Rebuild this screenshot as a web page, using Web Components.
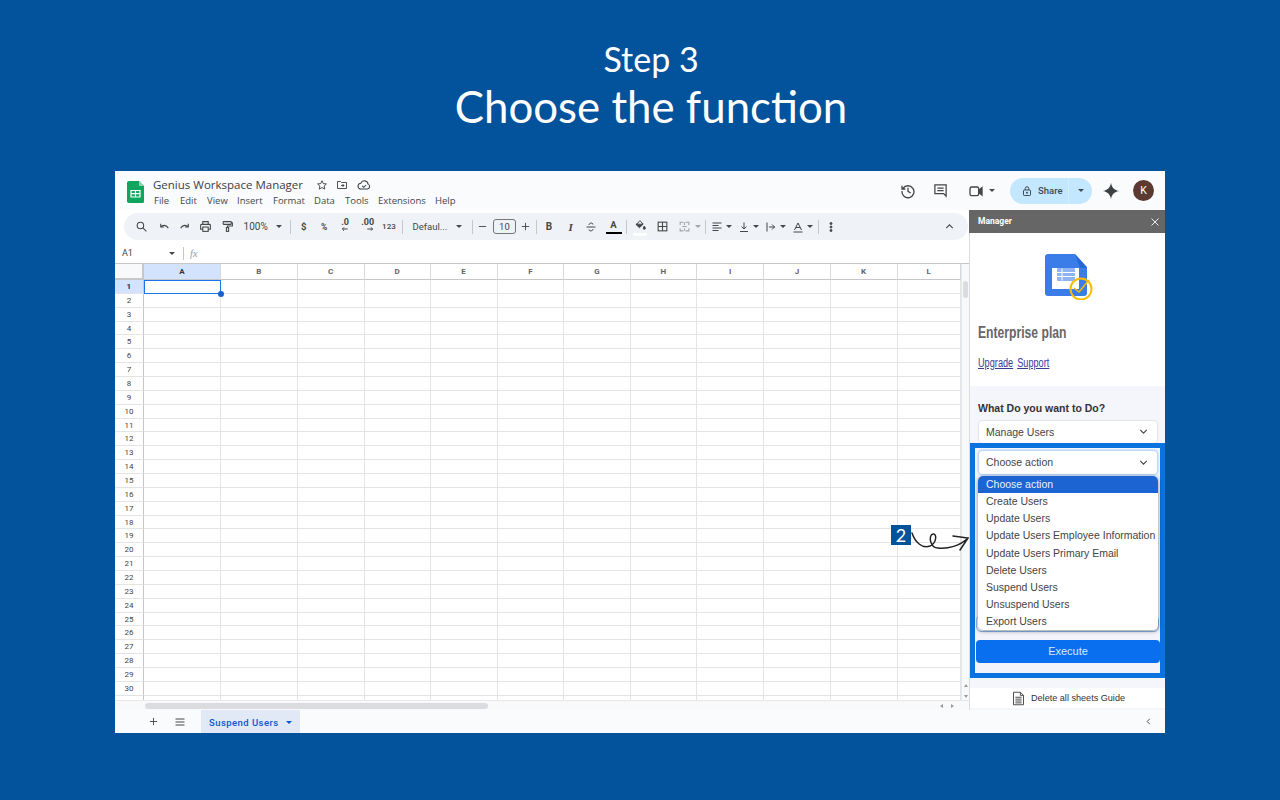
<!DOCTYPE html>
<html lang="en"><head><meta charset="utf-8"><title>Choose the function</title>
<style>
html,body{margin:0;padding:0;height:800px;overflow:hidden;background:#03529c}
body{font-family:"Liberation Sans",Arial,sans-serif}
</style></head><body>
<step-page>
  <step-title slot="title"></step-title>
  <sheet-window slot="window"></sheet-window>
</step-page>
<script>
const ICONS={
search:'<circle cx="10" cy="10" r="6"/><path d="M14.5 14.5 21 21"/>',
undo:'<path d="M5 7v6h6M5 13c3-4 10-5 14 2"/>',
redo:'<path d="M19 7v6h-6M19 13c-3-4-10-5-14 2"/>',
print:'<path d="M7 8V3h10v5M7 17H3V9.500A1.500 1.500 0 0 1 4.500 8h15A1.500 1.500 0 0 1 21 9.500V17h-4"/><rect x="7" y="13" width="10" height="8"/>',
paint:'<rect x="4" y="3" width="15" height="5" rx="1"/><path d="M19 5h2v6h-9v3"/><rect x="10" y="14" width="4" height="7"/>',
strike:'<path d="M3 12h18M8 8c0-5 8-5 8-1M16 16c0 5-8 5-8 1"/>',
fill:'<path d="M11 3 4 10.500 10 16l7-6.500z"/><path d="M19 13c1 2 2 3 2 4a2 2 0 0 1-4 0c0-1 1-2 2-4z" fill="currentColor"/><path d="M4 9.500 10 15l6.500-5.500H4z" fill="currentColor"/>',
borders:'<rect x="4" y="4" width="16" height="16"/><path d="M12 4v16M4 12h16"/>',
merge:'<path d="M4 9V4h6M14 4h6v5M4 15v5h6M14 20h6v-5M12 4v5M12 15v5M8 12h8"/>',
alignl:'<path d="M3 4h18M3 9h12M3 14h18M3 19h12"/>',
valign:'<path d="M12 3v12M7 11l5 5 5-5M4 21h16"/>',
wrap:'<path d="M4 3v18M8 12h12M14 7l5 5-5 5"/>',
rotate:'<path d="M5 18 12 4l7 14M7.500 13h9M3 22h18"/>',
chevup:'<path d="M6 15l6-6 6 6"/>',
chevdown:'<path d="M6 9l6 6 6-6"/>',
chevleft:'<path d="M15 6l-6 6 6 6"/>',
history:'<path d="M4.500 8A9 9 0 1 1 3 12M3 4v5h5M12 7v5.500l4 2.500"/>',
comment:'<path d="M3 3h18v18l-4-4H3zM7 8h10M7 12h10"/>',
video:'<rect x="3" y="6" width="13" height="13" rx="2.500"/><path d="M16 11l5-4v11l-5-4z" fill="currentColor"/>',
lock:'<rect x="5" y="10" width="14" height="11" rx="1.500"/><path d="M8.500 10V7a3.500 3.500 0 0 1 7 0v3"/><circle cx="12" cy="15.500" r="1.200" fill="currentColor"/>',
star:'<path d="M12 3.500l2.600 5.700 6.200.7-4.600 4.200 1.300 6.100L12 17.100l-5.500 3.100 1.300-6.100-4.600-4.200 6.200-.7z"/>',
folder:'<path d="M3 5h6l2 2h10v12H3zM10 13h6M13 10l3 3-3 3"/>',
cloud:'<path d="M7 19a5 5 0 0 1-.5-10A6.500 6.500 0 0 1 19 10.500 4.500 4.500 0 0 1 18 19zM9 13.500l2.500 2.500 4-4"/>',
spark:'<path d="M12 1c1 6.500 4.500 10 11 11-6.500 1-10 4.500-11 11-1-6.500-4.500-10-11-11 6.500-1 10-4.500 11-11z" fill="currentColor" stroke="none"/>',
close:'<path d="M5 5l14 14M19 5 5 19"/>',
plus:'<path d="M12 4v16M4 12h16"/>',
minus:'<path d="M4 12h16"/>',
menu:'<path d="M3 6h18M3 12h18M3 18h18"/>',
more:'<circle cx="12" cy="5" r="2" fill="currentColor"/><circle cx="12" cy="12" r="2" fill="currentColor"/><circle cx="12" cy="19" r="2" fill="currentColor"/>',
doc:'<path d="M4 2h11l5 5v15H4zM15 2v5h5M7 10h10M7 13h10M7 16h10M7 19h10"/>',
arrowl:'<path d="M20 12H5M9 7l-5 5 5 5"/>',
arrowr:'<path d="M4 12h15M15 7l5 5-5 5"/>'
};
class SIcon extends HTMLElement{connectedCallback(){
 const n=this.getAttribute('name'),s=+(this.getAttribute('size')||13),w=this.getAttribute('sw')||2;
 this.attachShadow({mode:'open'}).innerHTML=`<style>:host{display:inline-flex;align-items:center;justify-content:center;flex:none;line-height:0}</style><svg width="${s}" height="${s}" viewBox="0 0 24 24" fill="none" stroke="currentColor" stroke-width="${w}">${ICONS[n]||''}</svg>`;
}}
class SCaret extends HTMLElement{connectedCallback(){
 this.attachShadow({mode:'open'}).innerHTML=`<style>:host{display:inline-block;flex:none;width:0;height:0;border-left:3px solid transparent;border-right:3px solid transparent;border-top:3px solid currentColor}</style>`;
}}
customElements.define('s-icon',SIcon);customElements.define('s-caret',SCaret);

class StepPage extends HTMLElement{connectedCallback(){
 this.attachShadow({mode:'open'}).innerHTML=`<style>:host{display:flex;flex-direction:column;height:800px;box-sizing:border-box;padding:39px 115px 0}</style><slot name="title"></slot><slot name="window"></slot>`;
}}
class StepTitle extends HTMLElement{connectedCallback(){
 this.attachShadow({mode:'open'}).innerHTML=`<style>:host{display:flex;flex-direction:column;align-items:center;height:132px;padding-left:22px;color:#fff;font-family:Lato,"Open Sans",sans-serif;font-weight:400}
 .a{font-size:34px;line-height:39px}.b{font-size:43.800px;line-height:56px;font-variant-ligatures:common-ligatures}</style><div class="a">Step 3</div><div class="b">Choose the function</div>`;
}}
class SheetWindow extends HTMLElement{connectedCallback(){
 this.attachShadow({mode:'open'}).innerHTML=`<style>:host{display:flex;flex-direction:column;width:1050px;height:562px;background:#f9fbfd;position:relative;overflow:visible;color:#444746}
 .main{display:flex;height:500px;min-height:0}.left{width:854px;display:flex;flex-direction:column;flex:none;background:#fff}
 .badge{position:absolute;left:776px;top:354px;width:20px;height:20px;background:#03529c;color:#fff;font:18px/20px Lato,sans-serif;text-align:center}
 svg.sq{position:absolute;left:795px;top:357px}</style>
 <sheet-header></sheet-header>
 <div class="main"><div class="left"><sheet-toolbar></sheet-toolbar><formula-bar></formula-bar><sheet-grid></sheet-grid></div><side-panel></side-panel></div>
 <sheet-tabs></sheet-tabs>
 <div class="badge">2</div>
 <svg class="sq" width="62" height="28" viewBox="0 0 62 28" fill="none" stroke="#222" stroke-width="1.500" stroke-linecap="round"><path d="M2 5C5 14 12 21 20 18 27 15 27 5 23 6 18 7 20 20 28 20 38 21 50 18 58 10M43 8l15 2-8 12"/></svg>`;
}}
class SheetHeader extends HTMLElement{connectedCallback(){
 const menus=[['File',26],['Edit',27],['View',30],['Insert',36],['Format',41],['Data',31],['Tools',33],['Extensions',57],['Help',30]];
 this.attachShadow({mode:'open'}).innerHTML=`<style>:host{display:flex;height:39px;flex:none;align-items:stretch;background:#f9fbfd;box-sizing:border-box;padding-left:12px;font-family:"Open Sans",Roboto,sans-serif}
 .logo{margin-top:10px;flex:none}.txt{margin-left:9px;display:flex;flex-direction:column;padding-top:6px}
 .t{display:flex;align-items:center;font-size:11.500px;line-height:15px;color:#3c4043;height:15px}
 .m{display:flex;font-size:9.500px;line-height:14px;margin-top:2px;margin-left:1px}.m span{display:block}
 .sp{flex:1}.r{display:flex;align-items:center;padding-right:11px;color:#444746;padding-top:0}
 .share{width:82px;height:26px;border-radius:13px;background:#c2e7ff;display:flex;align-items:center;margin-left:15px;font:500 9.500px Roboto,sans-serif;color:#3f4a52;box-sizing:border-box}
 .s1{display:flex;align-items:center;gap:5px;padding-left:11px;width:59px;box-sizing:border-box;height:26px;border-right:1px solid #d5eeff}.s2{flex:1;display:flex;justify-content:center}
 .av{width:21px;height:21px;border-radius:50%;background:#5b3a30;color:#fff;font:10.500px/21px Roboto,sans-serif;text-align:center;margin-left:13px}</style>
 <svg class="logo" width="17" height="22" viewBox="0 0 17 22"><path d="M2 0h10l5 5v15.500a1.500 1.500 0 0 1-1.500 1.500h-13.500A2 2 0 0 1 0 20.500V2a2 2 0 0 1 2-2z" fill="#10a55e"/><path d="M12 0l5 5h-5z" fill="#8ad4ae"/><path d="M4 9.500h9v6.500H4zM4 12.700h9M8.500 9.500v6.500" fill="none" stroke="#fff" stroke-width="1.200"/></svg>
 <div class="txt"><div class="t">Genius Workspace Manager<s-icon name="star" size="12" sw="1.800" style="margin-left:13px"></s-icon><s-icon name="folder" size="12" sw="1.800" style="margin-left:8px"></s-icon><s-icon name="cloud" size="14" sw="1.800" style="margin-left:9px"></s-icon></div>
 <div class="m">${menus.map(m=>`<span style="width:${m[1]}px">${m[0]}</span>`).join('')}</div></div>
 <div class="sp"></div>
 <div class="r"><s-icon name="history" size="16"></s-icon><s-icon name="comment" size="15" style="margin-left:17px"></s-icon><s-icon name="video" size="16" style="margin-left:20px"></s-icon><s-caret style="margin-left:5px"></s-caret>
 <div class="share" style="margin-left:15px"><div class="s1"><s-icon name="lock" size="12"></s-icon><span>Share</span></div><div class="s2"><s-caret></s-caret></div></div>
 <s-icon name="spark" size="18" style="margin-left:10px;color:#3c4043"></s-icon><div class="av">K</div></div>`;
}}
class SheetToolbar extends HTMLElement{connectedCallback(){
 // [centre x on the page, width, markup]: spacing between items is derived from these
 const ic=(n,s=13,sw=2)=>`<s-icon name="${n}" size="${s}" sw="${sw}"></s-icon>`;
 const car='<s-caret></s-caret>', sep='<span class="sep"></span>';
 const dec=(t,a)=>`<span class="dec"><b>${t}</b><s-icon name="${a}" size="8" sw="3"></s-icon></span>`;
 const items=[
 [141,14,ic('search')],[164.3,14,ic('undo')],[184.3,14,ic('redo')],[205.7,14,ic('print')],[227.7,14,ic('paint')],
 [255.7,26,'<span style="font-size:10px">100%</span>'],[279,6,car],[290.7,1,sep],
 [303.7,8,'<b>$</b>'],[324.3,10,'<b style="font-size:8.500px">%</b>'],[345,14,dec('.0','arrowl')],[367.7,16,dec('.00','arrowr')],[389,16,'<span style="font-size:8px;font-weight:500">123</span>'],[402.3,1,sep],
 [430,40,'<span>Defaul...</span>'],[459.3,6,car],[472.3,1,sep],
 [483,11,ic('minus',11)],[504.5,23,'<span class="box">10</span>'],[525.3,11,ic('plus',11)],[536.7,1,sep],
 [549,8,'<b style="font-size:10px">B</b>'],[570.7,8,'<i style="font:bold italic 11px Liberation Serif,serif">I</i>'],[591.3,12,ic('strike',12)],
 [613.7,16,'<span class="au"><b>A</b><span class="bar"></span></span>'],[626.7,1,sep],
 [640.3,14,'<span class="fi">'+ic('fill',13,1.800)+'<span class="bar w"></span></span>'],[662.7,13,ic('borders')],[684.7,13,'<span class="dim">'+ic('merge')+'</span>'],[698.3,6,'<span class="dim">'+car+'</span>'],[705.3,1,sep],
 [716.7,12,ic('alignl',12)],[729,6,car],[744,12,ic('valign',12)],[755.7,6,car],[770.7,12,ic('wrap',12)],[782.7,6,car],[798.3,12,ic('rotate',12)],[810,6,car],[818.3,1,sep],[831.7,12,ic('more',12)],
 [949.7,13,ic('chevup')]];
 let x=124,html='';
 items.forEach(([c,w,h])=>{const l=c-w/2;html+=`<span class="i" style="width:${w}px;margin-left:${(l-x).toFixed(2)}px">${h}</span>`;x=l+w;});
 this.attachShadow({mode:'open'}).innerHTML=`<style>:host{display:flex;align-items:center;flex:none;height:27px;margin:3px 1px 0 9px;border-radius:14px;background:#eff3f8;color:#444746;font:9.500px Roboto,"Open Sans",sans-serif;box-sizing:border-box}
 .i{display:inline-flex;align-items:center;justify-content:center;flex:none;height:27px;white-space:nowrap}
 .sep{width:1px;height:14px;background:#c7c7c7;flex:none;display:block}.box{width:23px;height:15px;border:1px solid #747775;border-radius:3px;box-sizing:border-box;display:flex;align-items:center;justify-content:center;color:#444746;font-size:9.500px}
 .dim{opacity:.45;display:inline-flex;align-items:center}
 .dec{display:inline-flex;flex-direction:column;align-items:flex-end;font-size:9px;line-height:8px;position:relative;top:-1px}.dec s-icon{margin-top:-1px}
 .au,.fi{display:inline-flex;flex-direction:column;align-items:center;width:100%}.au b{font-size:9.500px;line-height:12px}.bar{display:block;width:100%;height:2.500px;background:#000;margin-top:1px}.bar.w{background:#fff}
 .fi{position:relative;top:1px}</style>${html}`;
}}
class FormulaBar extends HTMLElement{connectedCallback(){
 this.attachShadow({mode:'open'}).innerHTML=`<style>:host{display:flex;align-items:center;flex:none;height:20px;margin-top:3px;padding-left:7px;font:9px Roboto,sans-serif;color:#444746;background:#fff;box-sizing:border-box}
 .n{width:47px}.d{width:1px;height:13px;background:#c7c7c7;margin:0 6px 0 8px}i{font:italic 10.500px "Liberation Serif",serif;color:#9aa0a6}</style><span class="n">A1</span><s-caret></s-caret><span class="d"></span><i>fx</i>`;
}}
class SheetGrid extends HTMLElement{connectedCallback(){
 const cols=[77.2,76.6,67,66,67,66.7,66.3,66.7,67,66.3,67,63.4];
 const L='ABCDEFGHIJKL';
 let cells='<div class="c"></div>';
 cols.forEach((c,i)=>cells+=`<div class="h ${i==0?'on':''}">${L[i]}</div>`);
 for(let r=1;r<=31;r++){cells+=`<div class="n ${r==1?'on':''}">${r}</div>`;cols.forEach(()=>cells+='<div class="x"></div>');}
 this.attachShadow({mode:'open'}).innerHTML=`<style>:host{display:flex;flex:1;min-height:0;position:relative;background:#fff;font:bold 8px Roboto,"Open Sans",sans-serif;color:#5f6368}
 .g{display:grid;width:846px;height:447px;overflow:hidden;flex:none;box-sizing:border-box;border-top:1px solid #c7c7c7;grid-template-columns:28.800px ${cols.map(c=>c+'px').join(' ')};grid-template-rows:16px repeat(31,13.860px);position:relative;align-content:start}
 .c{background:#f8f9fa;border-right:2px solid #c7c7c7;border-bottom:2px solid #c7c7c7;box-sizing:border-box}
 .h{display:flex;align-items:center;justify-content:center;border-right:1px solid #d8d8d8;border-bottom:1px solid #c7c7c7;background:#fff;box-sizing:border-box;color:#5f6368}
 .n{display:flex;align-items:center;justify-content:center;border-right:1px solid #c7c7c7;border-bottom:1px solid #e4e4e4;box-sizing:border-box;font-weight:400;color:#444}
 .x{border-right:1px solid #e4e4e4;border-bottom:1px solid #e4e4e4;box-sizing:border-box}
 .on{background:#d3e3fd;color:#0b57d0;font-weight:700}.h.on{color:#333}.n.on{color:#0b2f6b}
 .sel{position:absolute;left:28.500px;top:16px;width:77.500px;height:14px;border:1.500px solid #1a73e8;box-sizing:border-box}
 .dot{position:absolute;left:103px;top:27px;width:6px;height:6px;border-radius:50%;background:#1a5fd0}
 .v{width:8px;flex:none;background:#f8f9fa;border-left:1px solid #e8e8e8;box-sizing:border-box;position:relative;border-top:1px solid #c7c7c7}
 .th{position:absolute;left:1px;top:17px;width:5px;height:17px;border-radius:3px;background:#dadce0}
 .ua,.da{position:absolute;left:1.500px;width:0;height:0;border-left:2px solid transparent;border-right:2px solid transparent}.ua{top:420px;border-bottom:3px solid #999}.da{top:431px;border-top:3px solid #999}
 .hb{position:absolute;left:0;right:0;bottom:0;height:10px;background:#f8f9fa;border-top:1px solid #e8e8e8;box-sizing:border-box}
 .hth{position:absolute;left:30px;top:2px;width:343px;height:6px;border-radius:3px;background:#dadce0}
 .hl{position:absolute;left:825px;top:3px;border-top:2px solid transparent;border-bottom:2px solid transparent;border-right:3px solid #999}.hr{position:absolute;left:836px;top:3px;border-top:2px solid transparent;border-bottom:2px solid transparent;border-left:3px solid #999}
 </style><div class="g">${cells}<div class="sel"></div><div class="dot"></div></div><div class="v"><div class="th"></div><div class="ua"></div><div class="da"></div></div><div class="hb"><div class="hth"></div><div class="hl"></div><div class="hr"></div></div>`;
}}
class SheetTabs extends HTMLElement{connectedCallback(){
 this.attachShadow({mode:'open'}).innerHTML=`<style>:host{display:flex;align-items:center;height:23px;flex:none;background:#f9fbfd;color:#444746;padding-left:33px;box-sizing:border-box}
 .tab{margin-left:15px;width:99px;height:23px;background:#e1e9f7;color:#0b57d0;display:flex;align-items:center;justify-content:space-between;box-sizing:border-box;padding:1px 8px 0;font:500 9.500px Roboto,sans-serif;letter-spacing:.45px}</style>
 <s-icon name="plus" size="11"></s-icon><s-icon name="menu" size="12" style="margin-left:15px"></s-icon><div class="tab"><span>Suspend Users</span><s-caret></s-caret></div><span style="flex:1"></span><s-icon name="chevleft" size="11" style="margin-right:11px"></s-icon>`;
}}
class SelectBox extends HTMLElement{connectedCallback(){
 const f=this.hasAttribute('focus');
 this.attachShadow({mode:'open'}).innerHTML=`<style>:host{display:flex;align-items:center;justify-content:space-between;flex:none;box-sizing:border-box;width:180px;height:${f?25:24}px;padding:0 7px 1px;background:#fff;border-radius:4px;border:1px solid ${f?'#b9d6fb':'#e3e5ea'};box-shadow:${f?'0 0 0 1px #d6e6fd':'none'};font-size:10.500px;color:#444;}</style><slot></slot><s-icon name="chevdown" size="13" style="color:#444"></s-icon>`;
}}
class MenuList extends HTMLElement{connectedCallback(){
 const items=['Choose action','Create Users','Update Users','Update Users Employee Information','Update Users Primary Email','Delete Users','Suspend Users','Unsuspend Users','Export Users'];
 this.attachShadow({mode:'open'}).innerHTML=`<style>:host{position:absolute;left:3px;top:28px;width:180px;display:block;background:#fff;border-radius:5px;box-shadow:0 1px 4px rgba(0,0,0,.45);overflow:hidden;font-size:10.500px;color:#444;z-index:2}
 div{height:17.150px;line-height:17.150px;padding-left:8px;white-space:nowrap}.on{background:#1b64d2;color:#eaf1ff}</style>${items.map((t,i)=>`<div class="${i?'':'on'}">${t}</div>`).join('')}`;
}}
class SidePanel extends HTMLElement{connectedCallback(){
 this.attachShadow({mode:'open'}).innerHTML=`<style>:host{display:flex;flex-direction:column;width:196px;flex:none;background:#fff;border-left:1px solid #dadce0;box-sizing:border-box;font-family:"Liberation Sans",Arial,sans-serif;position:relative}
 .hd{height:23px;background:#666;color:#fff;font:bold 8.500px/23px Roboto,sans-serif;display:flex;align-items:center;justify-content:space-between;padding:0 4px 0 9px;flex:none;margin-left:-1px}
 .top{height:153px;flex:none;padding-left:8px;box-sizing:border-box;position:relative}
 .lg{display:block;margin:21px 0 0 67px}
 h2{margin:23px 0 0;font:bold 17px/20px "Liberation Sans",sans-serif;color:#666;transform:scaleX(.715);transform-origin:0 50%;white-space:nowrap;width:max-content}
 .lk{margin-top:12px;font:13.700px/16px "Liberation Sans",sans-serif;color:#3a3a9a;display:flex;gap:6px;transform:scaleX(.67);transform-origin:0 50%;width:max-content}.lk a{color:inherit;text-decoration:underline}
 .low{flex:1;background:#f5f5fc;display:flex;flex-direction:column;min-height:0}
 .q{font:bold 10.500px/13px "Liberation Sans",sans-serif;color:#333;margin:16px 0 0 8px}
 .s1{margin:5px 0 0 8px;height:24px;overflow:hidden;flex:none}
 .bx{position:relative;flex:none;width:195px;height:235px;border:5px solid #0a73e0;box-sizing:border-box;background:#f3f4fb;margin-top:-1px}
 .bx select-box{position:absolute;left:3px;top:2px}
 .hid{position:absolute;left:1px;top:167px;width:183px;height:17px;border:1px solid #8ab8f5;border-radius:5px;box-sizing:border-box;background:#fff}
 .ex{position:absolute;left:1px;top:192px;width:184px;height:23px;background:#0a6fef;border-radius:4px;color:#d8e8ff;font-size:11px;line-height:23px;text-align:center}
 .sp{height:10px;flex:none}
 .ft{height:20px;background:#fff;display:flex;align-items:center;justify-content:center;gap:5px;font-size:9.100px;color:#333;flex:none;padding-left:1px;box-shadow:0 1px 0 #e4e4e4}
 .ed{height:2px;flex:none;background:#f5f5fc}</style>
 <div class="hd"><span>Manager</span><s-icon name="close" size="12" sw="2" style="color:#eee"></s-icon></div>
 <div class="top"><svg class="lg" width="50" height="46" viewBox="0 0 50 46"><path d="M3 0h27l12 13v26a3 3 0 0 1-3 3H3a3 3 0 0 1-3-3V3a3 3 0 0 1 3-3z" fill="#3b7de8"/><path d="M3 0h27l5 14h7L30 0z" fill="#2569d8"/><rect x="7" y="14" width="27" height="21" fill="#fff"/><rect x="12" y="14" width="18" height="13" rx="1" fill="#8fb4f5"/><path d="M17 14.500v12M12 18.500h18M12 22.500h18" stroke="#fff" stroke-width="1"/><circle cx="36" cy="35" r="10.500" fill="none" stroke="#fbbc04" stroke-width="2"/><path d="M29 34l5 4 10-12" fill="none" stroke="#fbbc04" stroke-width="1.500"/></svg>
 <h2>Enterprise plan</h2><div class="lk"><a>Upgrade</a><a>Support</a></div></div>
 <div class="low"><div class="q">What Do you want to Do?</div><div class="s1"><select-box>Manage Users</select-box></div>
 <div class="bx"><select-box focus>Choose action</select-box><div class="hid"></div><menu-list></menu-list><div class="ex">Execute</div></div><div class="sp"></div>
 <div class="ft"><s-icon name="doc" size="15" sw="1.500" style="color:#444"></s-icon><span>Delete all sheets Guide</span></div><div class="ed"></div></div>`;
}}
[['step-page',StepPage],['step-title',StepTitle],['sheet-window',SheetWindow],['sheet-header',SheetHeader],['sheet-toolbar',SheetToolbar],['formula-bar',FormulaBar],['sheet-grid',SheetGrid],['sheet-tabs',SheetTabs],['select-box',SelectBox],['menu-list',MenuList],['side-panel',SidePanel]].forEach(([n,c])=>customElements.define(n,c));
</script></body></html>
